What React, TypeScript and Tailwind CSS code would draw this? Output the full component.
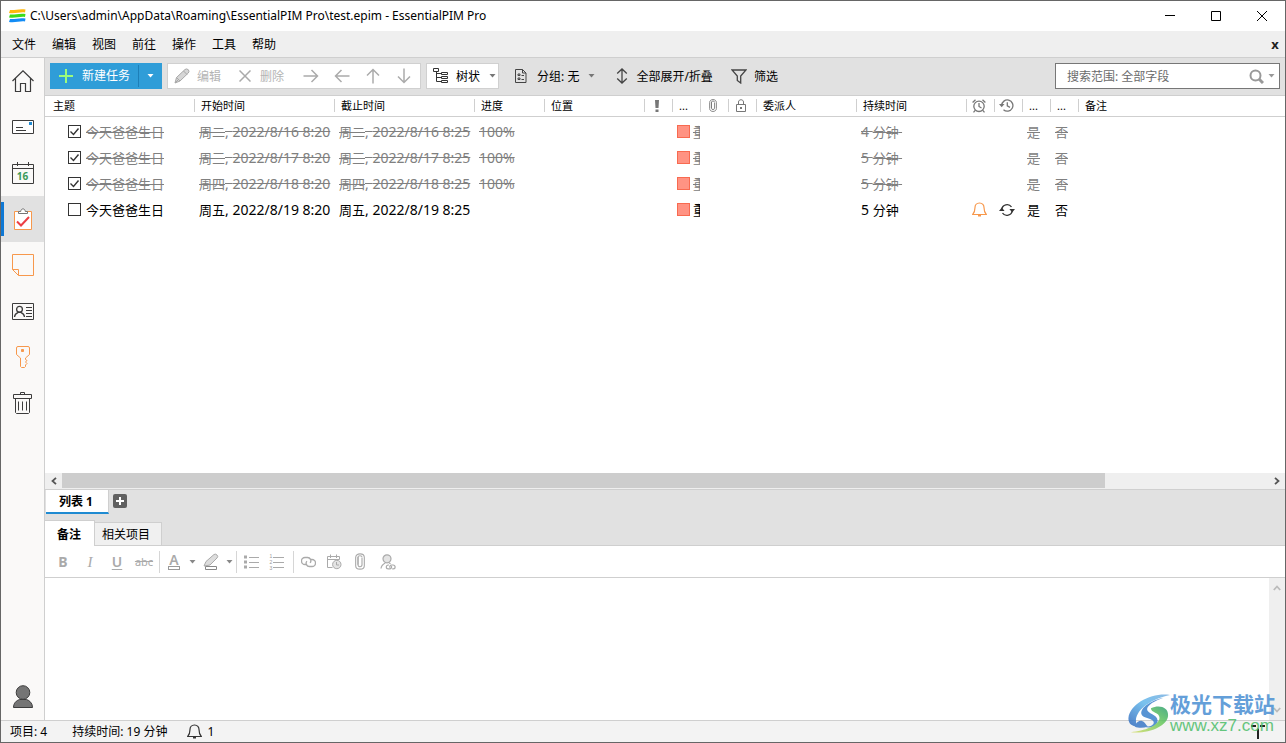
import React from 'react';

type IconProps = { className?: string };

const menus = ['文件', '编辑', '视图', '前往', '操作', '工具', '帮助'];

const tasks = [
  { id: 1, day: '周二', date: '2022/8/16', minutes: '4', done: true },
  { id: 2, day: '周三', date: '2022/8/17', minutes: '5', done: true },
  { id: 3, day: '周四', date: '2022/8/18', minutes: '5', done: true },
  { id: 4, day: '周五', date: '2022/8/19', minutes: '5', done: false },
];

const Caret: React.FC<IconProps> = ({ className = 'text-[#777]' }) => (
  <svg width="7" height="4" viewBox="0 0 7 4" className={className} fill="currentColor">
    <path d="M0.5 0h6L3.5 3.5z" />
  </svg>
);

const Logo = () => (
  <svg width="17" height="14" viewBox="0 0 17 14">
    <path d="M1 1C6 1.500 10-.5 16.500.5L16 3.500C11 2.800 6 5 0 4z" fill="#ffb80c" />
    <path d="M1 5.500C6 6 10 4 16.500 5L16 8C11 7.300 6 9.500 0 8.500z" fill="#3ddb1c" />
    <path d="M1 10c5 .5 9-1.500 15.500-.5L16 12.500c-5-.7-10 1.500-16 .5z" fill="#128cf5" />
  </svg>
);

/* ---------- sidebar icons ---------- */

const HomeIcon = () => (
  <svg width="22" height="22" viewBox="0 0 22 22" fill="none" stroke="#3c3c3c" strokeWidth="1.200">
    <path d="M.5 11 11 .8 21.500 11M3.500 8.500v13h5v-8h5v8h5v-13" fill="none" />
  </svg>
);

const MailIcon = () => (
  <svg width="22" height="14" viewBox="0 0 22 14" fill="none" stroke="#3c3c3c">
    <path d="M.5.5h21v13H.5z" fill="#fff" />
    <path d="M4 7.500h7M4 10.500h10" />
    <path d="M17 2h3v3h-3z" fill="#1f8bd2" stroke="none" />
  </svg>
);

const CalendarIcon = () => (
  <span className="relative block h-[22px] w-[22px]">
    <svg width="22" height="22" viewBox="0 0 22 22" fill="none" stroke="#3c3c3c">
      <path d="M.5 2.500h21v19H.5zM.5 6.500h21M5.500 0v4M16.500 0v4" />
    </svg>
    <span className="absolute inset-x-0 top-[7px] text-center text-[10px] leading-[14px] font-bold text-[#3d9a5a]">16</span>
  </span>
);

const TasksIcon = () => (
  <svg width="20" height="23" viewBox="0 0 20 23" fill="none">
    <path d="M1.500 3.500h17v18h-17z" stroke="#f7984c" fill="#fff" />
    <path d="M5.500 5.500V3.500h2.200C8 0 12 0 12.300 3.500h2.200v2z" stroke="#757575" fill="#fff" />
    <path d="m4 13.500 4 4 8-8.500" stroke="#ec3f45" strokeWidth="2" />
  </svg>
);

const NoteIcon = () => (
  <svg width="22" height="22" viewBox="0 0 22 22" fill="none" stroke="#f7984c">
    <path d="M.5.500h21v21H6.500L.5 15.500zM.5 15.500h6v6" />
  </svg>
);

const ContactIcon = () => (
  <svg width="22" height="17" viewBox="0 0 22 17" fill="none" stroke="#3c3c3c">
    <path d="M.5.500h21v16H.5zM14 4.500h6M14 7.500h6M14 10.500h6M14 13.500h6" />
    <circle cx="7.500" cy="6.300" r="2.900" strokeWidth="1.300" />
    <path d="M2.500 14c.2-2.800 1.700-3.900 3.700-4.700h2.600c2 .8 3.500 1.900 3.700 4.700" strokeWidth="1.300" />
  </svg>
);

const KeyIcon = () => (
  <svg width="14" height="22" viewBox="0 0 14 22" fill="none" stroke="#f7984c">
    <path d="M2 .5h10q1.500 0 1.500 1.500v6.500L9.500 12v1.500l1.500 1-1.500 1.500 1.500 1.500-1.500 1.500v1.500l-1 1h-3l-1-1V12L.5 8.500V2Q.5.500 2 .5z" />
    <path d="M5.500 3.500h2v2h-2z" fill="#f7984c" />
  </svg>
);

const TrashIcon = () => (
  <svg width="20" height="22" viewBox="0 0 20 22" fill="none" stroke="#3c3c3c">
    <path d="M.5 2.500h18v4H.5zM7.500 2.500v-2h4v2M2.500 6.500v14l1 1h12l1-1v-14M5.500 9.500v9M9.500 9.500v9M13.500 9.500v9" />
  </svg>
);

const UserIcon = () => (
  <svg width="20" height="23" viewBox="0 0 20 23" fill="#757575" stroke="#3c3c3c">
    <path d="M.5 22.500C.5 18 3.500 15.500 6.500 14.500h7c3 1 6 3.500 6 8z" />
    <circle cx="10" cy="7.500" r="6.800" />
  </svg>
);

const navItems = [
  { name: '今日', icon: <HomeIcon /> },
  { name: '邮件', icon: <MailIcon /> },
  { name: '日历', icon: <CalendarIcon /> },
  { name: '任务', icon: <TasksIcon /> },
  { name: '便笺', icon: <NoteIcon /> },
  { name: '联系人', icon: <ContactIcon /> },
  { name: '密码', icon: <KeyIcon /> },
  { name: '回收站', icon: <TrashIcon /> },
];

/* ---------- small icons ---------- */

const PencilIcon = () => (
  <svg width="16" height="16" viewBox="0 0 16 16" fill="#d6d6d6" stroke="#a8a8a8">
    <path d="M1 15l1.500-5.500L11 1.500q1.500-1.300 3.300.200 1.400 1.600 0 3.300L6 13z" />
    <path d="m2.500 9.500 3.500 3.500M9.500 3l3.500 3.500M1 15l3-3" fill="none" />
  </svg>
);

// one arrow shape, turned for each direction
const Arrow: React.FC<IconProps> = ({ className }) => (
  <svg width="16" height="14" viewBox="0 0 16 14" fill="none" stroke="#ababab" strokeWidth="1.500" className={className}>
    <path d="M.5 7h14M8.500 1l6 6-6 6" />
  </svg>
);

const Clip: React.FC<IconProps> = ({ className }) => (
  <svg viewBox="0 0 9 15" fill="none" stroke="currentColor" className={className}>
    <path d="M6.300 4v6.500c0 2.300-3.600 2.300-3.600 0V3.500" />
    <path d="M2.700 10.500V3.400c0-1.400 3.600-1.400 3.600 0M.6 4v7c0 4.500 7.800 4.500 7.800 0V4c0-4.500-7.800-4.500-7.800 0z" />
  </svg>
);

const LockIcon = () => (
  <svg width="10" height="13" viewBox="0 0 10 13" fill="none" stroke="#777">
    <path d="M.5 5.500h9v7h-9zM2.500 5.500V3c0-3 5-3 5 0v2.500" />
    <path d="M4 8h2v2H4z" fill="#777" stroke="none" />
  </svg>
);

const AlarmIcon = () => (
  <svg width="14" height="14" viewBox="0 0 14 14" fill="none" stroke="#777" strokeWidth="1.300">
    <circle cx="7" cy="7.300" r="5.200" />
    <path d="M7 4v3.500l2.500 1.500M.6 3.500 3.500.8M13.400 3.500 10.500.8M3.200 11.300 1.500 13.300M10.800 11.300l1.700 2" />
  </svg>
);

const HistoryIcon = () => (
  <svg width="15" height="13" viewBox="0 0 15 13" fill="none" stroke="#777" strokeWidth="1.300">
    <path d="M2.700 6.500a5.600 5.600 0 1 1 1.800 4.200M8.300 3.200v3.700l2.700 1.500" />
    <path d="M0 5h5.500L2.700 8.300z" fill="#777" stroke="none" />
  </svg>
);

const Bell: React.FC<IconProps> = ({ className }) => (
  <svg width="15" height="15" viewBox="0 0 15 15" fill="none" stroke="currentColor" strokeWidth="1.200" className={className}>
    <path d="M7.500 1C4.500 1 3 3 3 5.500c0 3-.5 5-2.300 7h13.600c-1.800-2-2.300-4-2.300-7C12 3 10.500 1 7.500 1z" />
    <path d="M6 13.600h3" strokeWidth="1.800" />
  </svg>
);

const RepeatIcon = () => (
  <svg width="16" height="14" viewBox="0 0 16 14" fill="none" stroke="#333" strokeWidth="1.300">
    <path d="M2.800 6.500A5.300 5.300 0 0 1 12.500 4M13.200 7.500A5.300 5.300 0 0 1 3.500 10" />
    <path d="m0 8 2.800-3.500L5.600 8zM10.400 6h5.600l-2.800 3.500z" fill="#333" stroke="none" />
  </svg>
);

const TreeIcon = () => (
  <svg width="16" height="16" viewBox="0 0 16 16" fill="none" stroke="#333">
    <path d="M.5.500h5v3h-5zM8.500 4.500h6v2h-6zM8.500 8.500h6v2h-6zM8.500 12.500h6v2h-6zM3.500 3.500v10h5M3.500 5.500h5M3.500 9.500h5" />
  </svg>
);

const GroupIcon = () => (
  <svg width="12" height="14" viewBox="0 0 12 14" fill="none" stroke="#444">
    <path d="M.5.500h7l3.500 3.500v9.500H.5zM7.500.500V4H11M3 5h2v1.500H3zM3 9h2v1.500H3zM6.500 6.500h2.500M6.500 10.500h2.500" />
  </svg>
);

const UpDownIcon = () => (
  <svg width="12" height="16" viewBox="0 0 12 16" fill="none" stroke="#444" strokeWidth="1.300">
    <path d="M6 1v14M1.200 5.500 6 1l4.800 4.500M1.200 10.500 6 15l4.800-4.500" />
  </svg>
);

const FunnelIcon = () => (
  <svg width="16" height="15" viewBox="0 0 16 15" fill="none" stroke="#444" strokeWidth="1.300">
    <path d="M1 1h14L9.700 7v7L6.300 11.500V7z" />
  </svg>
);

const ChevronIcon: React.FC<IconProps> = ({ className }) => (
  <svg width="8" height="8" viewBox="0 0 8 8" fill="none" stroke="currentColor" strokeWidth="1.800" className={className}>
    <path d="M2 .8 5.500 4 2 7.200" />
  </svg>
);

const FormatPen = () => (
  <svg width="16" height="17" viewBox="0 0 16 17" fill="#ddd" stroke="#aaa">
    <path d="M1 13l2-4.500 8-7q1.500-1 3 .5t0 3L7 12z" />
    <path d="M2.500 13.500h11v3h-11z" fill="#fff" stroke="#888" />
  </svg>
);

const BulletList = () => (
  <svg width="15" height="14" viewBox="0 0 15 14" stroke="#aaa" fill="#aaa">
    <path d="M0 .5h3v3H0zM0 5.500h3v3H0zM0 10.500h3v3H0z" stroke="none" />
    <path d="M5 2.500h10M5 7.500h10M5 12.500h10" />
  </svg>
);

const NumberList = () => (
  <span className="flex items-center gap-px text-[#999]">
    <span className="flex flex-col font-['Liberation_Sans',sans-serif] text-[5px] leading-[6px]">
      <span>1</span>
      <span>2</span>
      <span>3</span>
    </span>
    <svg width="11" height="14" viewBox="0 0 11 14" stroke="#aaa">
      <path d="M0 2.500h11M0 7.500h11M0 12.500h11" />
    </svg>
  </span>
);

const LinkIcon = () => (
  <svg width="15" height="12" viewBox="0 0 15 12" fill="none" stroke="#aaa" strokeWidth="1.300">
    <path d="M5.500 8.500H4a3.300 3.300 0 0 1 0-7h2.500a3.300 3.300 0 0 1 2.600 5.400" />
    <path d="M9.500 3.500H11a3.300 3.300 0 0 1 0 7H8.500A3.300 3.300 0 0 1 5.900 5.100" />
  </svg>
);

const DateClock = () => (
  <svg width="15" height="16" viewBox="0 0 15 16" fill="none" stroke="#aaa">
    <path d="M5.500 13.500h-5v-11h12v3M.5 5.500h12M3.500.500v3.500M9.500.500v3.500" />
    <circle cx="9.800" cy="10.500" r="4.200" fill="#e4e4e4" />
    <path d="M9.500 8v3h2.500" />
  </svg>
);

const PersonLink = () => (
  <svg width="16" height="16" viewBox="0 0 16 16" fill="none" stroke="#aaa" strokeWidth="1.200">
    <circle cx="7" cy="4.800" r="4" fill="#e4e4e4" />
    <path d="M1 14.500c.3-3 1.800-4.300 4.300-5.500M9 8.800l1.500 1" />
    <path d="M9 11h-.8a1.900 1.900 0 0 0 0 3.800h1.500a1.900 1.900 0 0 0 1.700-2.800M12.200 14.800h1a1.900 1.900 0 0 0 0-3.800h-1.500a1.900 1.900 0 0 0-1.700 2.800" />
  </svg>
);

/* ---------- page parts ---------- */

const TitleBar = () => (
  <header className="flex h-[30px] shrink-0 items-center bg-white pl-2">
    <Logo />
    <h1 className="ml-1 min-w-0 flex-1 truncate text-[12px] leading-4">
      C:\Users\admin\AppData\Roaming\EssentialPIM Pro\test.epim - EssentialPIM Pro
    </h1>
    <button aria-label="最小化" className="grid h-full w-[46px] place-items-center">
      <svg width="10" height="10" stroke="#000"><path d="M0 4.500h10" /></svg>
    </button>
    <button aria-label="最大化" className="grid h-full w-[46px] place-items-center">
      <svg width="10" height="10" stroke="#000" fill="none"><path d="M.5.500h9v9h-9z" /></svg>
    </button>
    <button aria-label="关闭" className="grid h-full w-[46px] place-items-center">
      <svg width="10" height="10" stroke="#000"><path d="m0 0 10 10M10 0 0 10" /></svg>
    </button>
  </header>
);

const MenuBar = () => (
  <nav className="flex h-[27px] shrink-0 items-center border-b border-[#cfcfcf] bg-[#efefef] pl-[3px]">
    {menus.map((label) => (
      <button key={label} className="h-full px-2 pt-0.5">{label}</button>
    ))}
    <button aria-label="关闭文件" className="ml-auto w-5 text-center text-[13px] leading-4 font-bold text-[#222]">x</button>
  </nav>
);

const Sidebar = () => (
  <nav className="flex w-11 shrink-0 flex-col border-r border-[#cfcfcf] bg-[#faf9f8]">
    {navItems.map((item) => (
      <button
        key={item.name}
        aria-label={item.name}
        className={
          item.name === '任务'
            ? 'relative grid h-[46px] place-items-center bg-[#e1e1e1]'
            : 'grid h-[46px] place-items-center'
        }
      >
        {item.name === '任务' && <span className="absolute top-1.5 left-0 h-[34px] w-[3px] bg-[#0f78d4]" />}
        {item.icon}
      </button>
    ))}
    <button aria-label="账户" className="mt-auto mb-3 grid place-items-center">
      <UserIcon />
    </button>
  </nav>
);

const Toolbar = () => (
  <div className="flex h-[38px] shrink-0 items-start border-b border-[#cfcfcf] bg-[#e1e1e1] px-[5px] pt-[5px]">
    <div className="flex h-[26px] bg-[#2f9dd8] text-white">
      <button className="flex items-center gap-2 pr-2 pl-2">
        <svg width="16" height="14" viewBox="0 0 16 14" stroke="#9dfc7c" strokeWidth="2"><path d="M1 7h14M8 0v14" /></svg>
        新建任务
      </button>
      <button aria-label="新建选项" className="my-0.5 grid w-[24px] place-items-center border-l border-[#1d7fb8]">
        <Caret className="text-white" />
      </button>
    </div>
    <div className="ml-[5px] flex h-[26px] items-center border border-[#d0d0d0] bg-white text-[#b4b4b4]">
      <button className="flex h-full items-center gap-[7px] px-1.5"><PencilIcon /><span className="pt-0.5">编辑</span></button>
      <button className="ml-3 flex h-full items-center gap-[9px]">
        <svg width="12" height="12" stroke="#aaa" strokeWidth="1.500"><path d="m.5.500 11 11M11.500.500l-11 11" /></svg>
        <span className="pt-0.5">删除</span>
      </button>
      <button aria-label="降级" className="ml-[11px] grid h-full w-[31px] place-items-center"><Arrow /></button>
      <button aria-label="升级" className="grid h-full w-[31px] place-items-center"><Arrow className="rotate-180" /></button>
      <button aria-label="上移" className="grid h-full w-[31px] place-items-center"><Arrow className="-rotate-90" /></button>
      <button aria-label="下移" className="mr-px grid h-full w-[31px] place-items-center"><Arrow className="rotate-90" /></button>
    </div>
    <button className="ml-[5px] flex h-[26px] items-center border border-[#d0d0d0] bg-white pr-0.5 pl-1.5">
      <TreeIcon />
      <span className="mr-[9px] ml-[7px] pt-0.5">树状</span>
      <Caret />
    </button>
    <button className="ml-4 flex h-[26px] items-center">
      <GroupIcon />
      <span className="mr-[9px] ml-2.5 pt-0.5">分组: 无</span>
      <Caret />
    </button>
    <button className="ml-[21px] flex h-[26px] items-center gap-2"><UpDownIcon /><span className="pt-0.5">全部展开/折叠</span></button>
    <button className="ml-[18px] flex h-[26px] items-center gap-[7px]"><FunnelIcon /><span className="pt-0.5">筛选</span></button>
    <div className="ml-auto flex h-[26px] w-[225px] items-center border border-[#777] bg-white pr-1">
      <input
        aria-label="搜索"
        placeholder="搜索范围: 全部字段"
        className="min-w-0 flex-1 pt-0.5 pl-[11px] leading-4 outline-none placeholder:text-[#6b6b6b]"
      />
      <button aria-label="执行搜索" className="flex items-center gap-1">
        <svg width="15" height="15" viewBox="0 0 15 15" fill="none" stroke="#999" strokeWidth="2">
          <circle cx="6.500" cy="6.500" r="5" />
          <path d="m10 10 4 4" strokeWidth="3" />
        </svg>
        <Caret className="text-[#999]" />
      </button>
    </div>
  </div>
);

const HeadCell: React.FC<{ children?: React.ReactNode; last?: boolean; icon?: boolean }> = ({ children, last, icon }) => (
  <th className="h-5 p-0 text-left font-normal">
    <div
      className={
        'flex h-[13px] items-center text-[11px] leading-[13px] whitespace-nowrap ' +
        (last ? 'pl-1.5' : icon ? 'justify-center border-r border-[#cfcfcf] pr-1' : 'border-r border-[#cfcfcf] pl-1.5')
      }
    >
      {children}
    </div>
  </th>
);

const TaskTable = () => (
  <table className="w-full table-fixed border-collapse">
    <colgroup>
      <col className="w-[150px]" />
      <col className="w-[140px]" />
      <col className="w-[140px]" />
      <col className="w-[70px]" />
      <col className="w-[100px]" />
      <col className="w-7" />
      <col className="w-7" />
      <col className="w-7" />
      <col className="w-7" />
      <col className="w-[100px]" />
      <col className="w-[110px]" />
      <col className="w-7" />
      <col className="w-7" />
      <col className="w-7" />
      <col className="w-7" />
      <col />
    </colgroup>
    <thead>
      <tr className="border-b border-[#cfcfcf]">
        <th className="h-5 p-0 text-left font-normal">
          <div className="flex h-[13px] items-center border-r border-[#cfcfcf] pl-2 text-[11px] leading-[13px]">主题</div>
        </th>
        <HeadCell>开始时间</HeadCell>
        <HeadCell>截止时间</HeadCell>
        <HeadCell>进度</HeadCell>
        <HeadCell>位置</HeadCell>
        <HeadCell icon>
          <svg width="4" height="12" fill="#777"><path d="M0 0h4l-.5 8h-3zM.5 9.500h3V12h-3z" /></svg>
        </HeadCell>
        <HeadCell>...</HeadCell>
        <HeadCell icon><Clip className="h-[13px] w-2 text-[#777]" /></HeadCell>
        <HeadCell icon><LockIcon /></HeadCell>
        <HeadCell>委派人</HeadCell>
        <HeadCell>持续时间</HeadCell>
        <HeadCell icon><AlarmIcon /></HeadCell>
        <HeadCell icon><HistoryIcon /></HeadCell>
        <HeadCell>...</HeadCell>
        <HeadCell>...</HeadCell>
        <HeadCell last>备注</HeadCell>
      </tr>
    </thead>
    <tbody className="before:block before:h-0.5">
      {tasks.map((task) => (
        <tr
          key={task.id}
          className={task.done ? 'h-[26px] text-[13px] text-[#808080] line-through' : 'h-[26px] text-[13px] text-black'}
        >
          <td className="p-0">
            <label className="flex items-center gap-[5px] pl-[23px] leading-5">
              <span className="grid">
                <input
                  type="checkbox"
                  defaultChecked={task.done}
                  className="peer col-start-1 row-start-1 h-[13px] w-[13px] appearance-none border border-[#333] bg-white"
                />
                <svg
                  width="13"
                  height="13"
                  className="pointer-events-none invisible col-start-1 row-start-1 peer-checked:visible"
                  fill="none"
                  stroke="#333"
                  strokeWidth="1.400"
                >
                  <path d="m2.500 6.500 3 3 5-6" />
                </svg>
              </span>
              <span>今天爸爸生日</span>
            </label>
          </td>
          <td className="p-0 pl-1 leading-5 whitespace-nowrap">
            {task.day}<span className="text-sm leading-5">, {task.date} 8:20</span>
          </td>
          <td className="p-0 pl-1 leading-5 whitespace-nowrap">
            {task.day}<span className="text-sm leading-5">, {task.date} 8:25</span>
          </td>
          <td className="p-0 pl-1 text-sm leading-5">{task.done && '100%'}</td>
          <td />
          <td />
          <td className="p-0">
            <div className="mr-px flex items-center overflow-hidden pl-1 leading-5 whitespace-nowrap">
              <span className="mr-[3px] h-[13px] w-[13px] shrink-0 border border-[#f86a50] bg-[#ff9383]" />
              <span>重要</span>
            </div>
          </td>
          <td />
          <td />
          <td />
          <td className="p-0 pl-1 leading-5 whitespace-pre">
            <span className="text-sm leading-5">{task.minutes + ' '}</span>分钟{' '}
          </td>
          <td className="p-0 pr-1">{!task.done && <Bell className="mx-auto text-[#f7984c]" />}</td>
          <td className="p-0 pr-1">{!task.done && <span className="grid place-items-center"><RepeatIcon /></span>}</td>
          <td className="p-0 pl-1 leading-5">是</td>
          <td className="p-0 pl-1 leading-5">否</td>
          <td />
        </tr>
      ))}
    </tbody>
  </table>
);

const HorizontalScroll = () => (
  <div className="flex h-4 shrink-0 bg-[#efefef]">
    <button aria-label="向左" className="grid w-[17px] place-items-center text-[#555]">
      <ChevronIcon className="rotate-180" />
    </button>
    <div className="flex-1">
      <div className="h-[15px] w-[86.500%] bg-[#cdcdcd]" />
    </div>
    <button aria-label="向右" className="grid w-[17px] place-items-center text-[#555]">
      <ChevronIcon />
    </button>
  </div>
);

const FormatButton: React.FC<{ name: string; children: React.ReactNode }> = ({ name, children }) => (
  <button aria-label={name} className="grid h-6 w-[26px] shrink-0 place-items-center">
    {children}
  </button>
);

const Separator = () => <span className="mx-px h-[22px] w-px bg-[#d6d6d6]" />;

const FormatBar = () => (
  <div className="flex h-8 shrink-0 items-center border-b border-[#cfcfcf] bg-white pl-[5px] text-[#aaa]">
    <div className="flex gap-px pr-px">
      <FormatButton name="粗体"><span className="text-sm leading-4 font-bold">B</span></FormatButton>
      <FormatButton name="斜体"><span className="font-['Liberation_Serif',serif] text-[15px] leading-4 italic">I</span></FormatButton>
      <FormatButton name="下划线"><span className="text-sm leading-4 font-semibold underline underline-offset-2">U</span></FormatButton>
      <FormatButton name="删除线"><span className="text-[11px] leading-4 line-through">abc</span></FormatButton>
    </div>
    <Separator />
    <FormatButton name="文字颜色">
      <span className="flex flex-col items-center">
        <span className="text-sm leading-[13px] font-semibold">A</span>
        <span className="h-1 w-3 border border-[#999]" />
      </span>
    </FormatButton>
    <button aria-label="选择文字颜色" className="grid h-6 w-[11px] place-items-center"><Caret className="text-[#888]" /></button>
    <FormatButton name="突出显示"><FormatPen /></FormatButton>
    <button aria-label="选择突出显示颜色" className="grid h-6 w-[11px] place-items-center"><Caret className="text-[#888]" /></button>
    <Separator />
    <FormatButton name="项目符号"><BulletList /></FormatButton>
    <FormatButton name="编号"><NumberList /></FormatButton>
    <div className="flex items-center pl-0.5">
      <Separator />
      <FormatButton name="链接"><LinkIcon /></FormatButton>
      <FormatButton name="插入日期"><DateClock /></FormatButton>
      <FormatButton name="附件"><Clip className="h-[17px] w-2.5" /></FormatButton>
    </div>
    <div className="pl-0.5">
      <FormatButton name="关联联系人"><PersonLink /></FormatButton>
    </div>
  </div>
);

const DetailPane = () => (
  <section className="flex shrink-0 flex-col">
    <div className="flex h-[31px] items-start border-t border-[#cfcfcf] bg-[#e1e1e1]">
      <button className="ml-px h-6 border-r border-b-2 border-r-[#cfcfcf] border-b-[#1f8bd2] bg-white pt-0.5 pr-[15px] pl-[13px] font-bold">
        列表 1
      </button>
      <button aria-label="添加列表" className="mt-1 ml-1 grid h-3.5 w-3.5 place-items-center rounded-[2px] bg-[#606060]">
        <svg width="8" height="8" stroke="#fff" strokeWidth="2"><path d="M0 4h8M4 0v8" /></svg>
      </button>
    </div>
    <div className="flex h-[26px] items-end bg-[#e1e1e1]">
      <button className="h-[26px] border-t border-r border-[#cfcfcf] bg-white px-3 pt-0.5 pr-[13px] font-bold">备注</button>
      <button className="h-6 border border-l-0 border-[#cfcfcf] bg-[#f0f0f0] pt-0.5 pr-[11px] pl-[7px]">相关项目</button>
      <span className="h-px flex-1 bg-[#cfcfcf]" />
    </div>
    <FormatBar />
    <div className="flex h-[142px]">
      <textarea aria-label="备注内容" className="block flex-1 resize-none p-2 outline-none" />
      <div className="flex w-4 flex-col justify-between bg-[#efefef] py-1 text-[#bbb]">
        <button aria-label="向上" className="grid h-3 place-items-center"><ChevronIcon className="-rotate-90" /></button>
        <button aria-label="向下" className="grid h-3 place-items-center"><ChevronIcon className="rotate-90" /></button>
      </div>
    </div>
  </section>
);

const StatusBar = () => (
  <footer className="flex h-[22px] shrink-0 items-center border-t border-[#cfcfcf] bg-[#f3f3f3] pl-[9px]">
    <span className="mr-[25px]">项目: 4</span>
    <span className="mr-5">持续时间: 19 分钟</span>
    <button className="flex items-center gap-[5px]"><Bell className="text-[#333]" />1</button>
    <svg width="14" height="14" viewBox="0 0 14 14" className="mr-5 ml-auto" stroke="#222" strokeWidth="2">
      <path d="M0 1h5M9 1h5M7 3.500V14" />
    </svg>
  </footer>
);

const Watermark = () => (
  <div className="pointer-events-none absolute right-2.5 bottom-1.5 flex items-center opacity-85">
    <svg width="42" height="42" viewBox="0 0 44 42">
      <defs>
        <linearGradient id="swirlBlue" x1="0" y1="1" x2="1" y2="0">
          <stop offset="0" stopColor="#3068bd" />
          <stop offset=".55" stopColor="#62b8ec" />
          <stop offset="1" stopColor="#7bb0e0" />
        </linearGradient>
        <linearGradient id="swirlGreen" x1="0" y1="1" x2="1" y2="0">
          <stop offset="0" stopColor="#d9df68" />
          <stop offset=".6" stopColor="#67c85d" />
          <stop offset="1" stopColor="#2c9e72" />
        </linearGradient>
      </defs>
      <path d="M44 1C26-2 2 10 .5 25 0 31 4 34 10 34 4 24 14 8 44 1z" fill="url(#swirlBlue)" />
      <path d="M37 4C24 7 13 14 14 21c1 5 13 4 13 9 0 3-5 5-10 4 5 3 14 0 14-6 0-7-11-7-11-12 0-4 8-9 17-12z" fill="#3c82cc" />
      <path d="M24 15c9-4 18-1 18 7 0 12-21 20-39 18 14-1 30-7 30-15 0-6-9-5-9-10z" fill="url(#swirlGreen)" />
      <path d="M7 34c4 2 9 2 14 0-3-2-3-5-7-6-3 0-6 2-7 6z" fill="#3a78c7" />
    </svg>
    <div className="flex flex-col">
      <span className="text-[21px] leading-6 font-bold text-[#4a8fd3]">极光下载站</span>
      <span className="font-['Liberation_Sans',sans-serif] text-[17px] leading-5 font-medium text-[#4cbd69]">www.xz7.com</span>
    </div>
  </div>
);

const App: React.FC = () => {
  return (
    <div className="relative flex min-h-screen flex-col border border-[#666] bg-white font-['Noto_Sans','Noto_Sans_CJK_SC',sans-serif] text-[12px] leading-4 text-black">
      <TitleBar />
      <MenuBar />
      <div className="flex flex-1">
        <Sidebar />
        <main className="flex min-w-0 flex-1 flex-col">
          <Toolbar />
          <div className="flex-1 overflow-hidden">
            <TaskTable />
          </div>
          <HorizontalScroll />
          <DetailPane />
        </main>
      </div>
      <StatusBar />
      <Watermark />
    </div>
  );
};

export default App;
